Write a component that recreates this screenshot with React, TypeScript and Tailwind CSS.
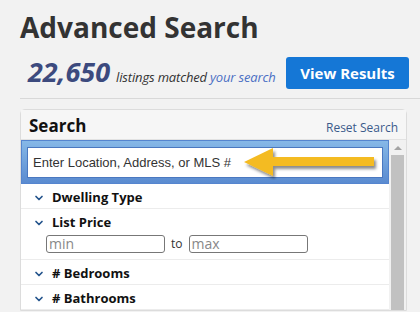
import { ChevronDown } from 'lucide-react'

// ─── Advanced search panel ──────────────────────────────────────────────────

const font = { fontFamily: '"Open Sans", "Noto Sans", sans-serif' }

function Row({ label, tall, children }: { label: string; tall?: boolean; children?: React.ReactNode }) {
  return (
    <div className={`border-b border-[#ececec] pl-[12px] pr-2 pt-[6px] ${tall ? 'h-[51px]' : 'h-[25px]'}`}>
      <div className="flex items-center h-[16px]">
        <ChevronDown className="w-[12px] h-[12px] text-[#24548c]" strokeWidth={3.4} />
        <span className="ml-[7px] text-[13px] font-bold text-[#111]">{label}</span>
      </div>
      {children}
    </div>
  )
}

function Arrow() {
  return (
    <svg className="absolute left-[214px] top-[-2px]" width="140" height="34" viewBox="0 0 140 34">
      <defs>
        <filter id="sh" x="-10%" y="-30%" width="130%" height="170%">
          <feDropShadow dx="2" dy="3" stdDeviation="1.6" floodColor="#000" floodOpacity="0.45" />
        </filter>
      </defs>
      <path d="M2 16 L31 2 L31 11 L132 11 L132 20 L31 20 L31 30 Z" fill="#f4bb22" filter="url(#sh)" />
    </svg>
  )
}

export default function App() {
  return (
    <div className="w-[420px] h-[312px] overflow-hidden bg-[#f2f2f2] pl-[20px] text-[#333]" style={font}>
      <h1 className="text-[28px] font-bold leading-[38px] pt-[8px] text-[#333]">Advanced Search</h1>

      {/* ── Count + results button ─────────────────────────────── */}
      <div className="flex items-center mt-[11px] pr-[11px]">
        <div className="flex items-baseline pl-[8px]">
          <span className="text-[27px] font-bold italic text-[#3c4a7e] leading-none">22,650</span>
          <span className="ml-[6px] text-[13px] italic text-[#333] tracking-[-0.15px]">listings matched</span>
          <span className="ml-[3px] text-[13px] italic text-[#4b6fc4] tracking-[-0.15px]">your search</span>
        </div>
        <button className="ml-auto w-[123px] h-[32px] rounded-[3px] bg-[#1577d6] text-white text-[15px] font-bold">
          View Results
        </button>
      </div>

      <div className="mt-[9px] border-t border-[#d8d8d8]" />

      {/* ── Search panel ──────────────────────────────────────────── */}
      <div className="mt-[10px] w-[387px] border border-[#dcdcdc] rounded-t-[5px] bg-white">
        <div className="flex items-end justify-between h-[30px] bg-[#f6f6f6] pl-[8px] pr-[8px] border-b border-[#e2e2e2]">
          <span className="text-[17px] font-bold text-[#111] leading-[26px]">Search</span>
          <span className="text-[12px] text-[#3b5a8b] leading-[22px]">Reset Search</span>
        </div>
        <div className="flex">
          <div className="flex-1">
            <div className="relative h-[44px] px-[5px] pt-[6px] bg-gradient-to-b from-[#86b8e7] to-[#5a8bd0] border border-[#5585cf]">
              <div className="relative h-[31px] bg-white border border-[#4a78c0] flex items-center pl-[5px]">
                <span className="text-[13px] text-[#333]" style={{ fontFamily: '"Liberation Sans", Arial, sans-serif' }}>
                  Enter Location, Address, or MLS #
                </span>
                <Arrow />
              </div>
            </div>
            <Row label="Dwelling Type" />
            <Row label="List Price" tall>
              <div className="flex items-center pl-[13px] mt-[4px]">
                <div className="w-[119px] h-[18px] border border-[#777] rounded-[3px] text-[14px] text-[#888] leading-[15px] pl-[2px]">min</div>
                <span className="mx-[6px] text-[12px] text-[#333]">to</span>
                <div className="w-[119px] h-[18px] border border-[#777] rounded-[3px] text-[14px] text-[#888] leading-[15px] pl-[2px]">max</div>
              </div>
            </Row>
            <Row label="# Bedrooms" />
            <Row label="# Bathrooms" />
          </div>
          <div className="w-[17px] bg-[#f1f1f1] flex flex-col items-center pt-[6px] px-[2px]">
            <div className="w-0 h-0 border-l-[4px] border-r-[4px] border-b-[4px] border-l-transparent border-r-transparent border-b-[#a3a3a3]" />
            <div className="mt-[5px] w-[13px] flex-1 bg-[#c1c1c1]" />
          </div>
        </div>
      </div>
    </div>
  )
}
